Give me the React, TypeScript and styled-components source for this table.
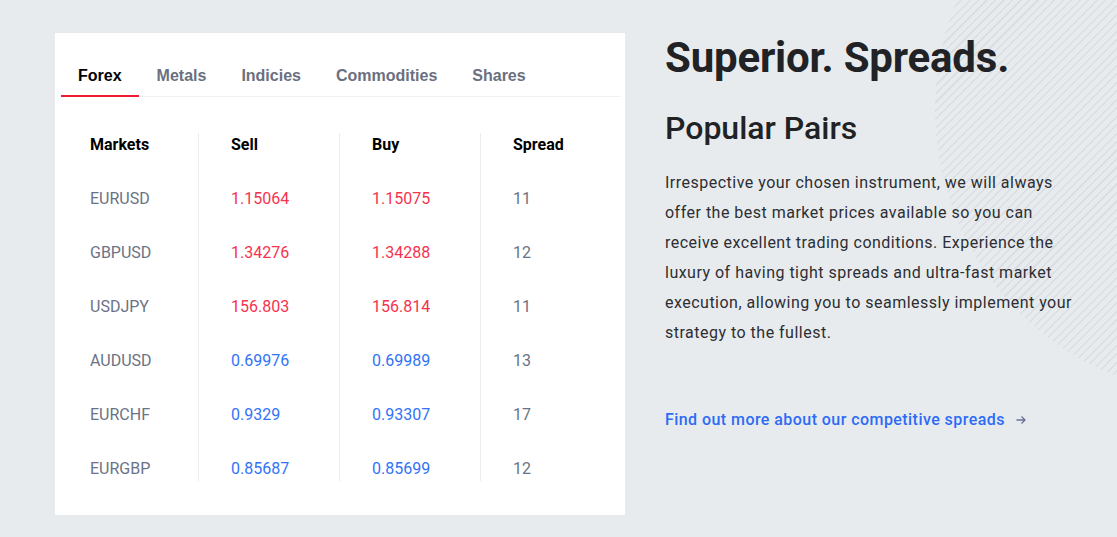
import React from "react";
import styled, { createGlobalStyle } from "styled-components";

const Global = createGlobalStyle`
  html, body { margin: 0; padding: 0; }
  body {
    background: #e8ebee;
    font-family: Roboto, "Liberation Sans", Arial, sans-serif;
    overflow: hidden;
  }
`;

const Page = styled.div`
  position: relative;
  width: 1117px;
  height: 537px;
  overflow: hidden;
  background: #e8ebee;
`;

const Hatch = styled.div`
  position: absolute;
  left: 935px;
  top: -176px;
  width: 572px;
  height: 572px;
  border-radius: 50%;
  background: repeating-linear-gradient(
    135deg,
    transparent 0px,
    transparent 4.5px,
    #d6dadf 4.5px,
    #d6dadf 6px
  );
  opacity: 0.75;
`;

const Layout = styled.div`
  position: relative;
  display: flex;
  gap: 40px;
  padding: 33px 0 0 55px;
`;

const Card = styled.div`
  width: 570px;
  height: 482px;
  box-sizing: border-box;
  background: #fff;
  padding: 20px 5px 0 6px;
`;

const Tabs = styled.div`
  display: flex;
  gap: 1px;
  border-bottom: 1px solid #f1f1f3;
`;

const Tab = styled.div<{ $active?: boolean }>`
  padding: 13px 17px 9px;
  font-family: "Liberation Sans", Arial, sans-serif;
  font-weight: 700;
  font-size: 16px;
  line-height: 20px;
  color: ${(p) => (p.$active ? "#000" : "#6a7080")};
  border-bottom: 2px solid ${(p) => (p.$active ? "#ee1c2e" : "transparent")};
  margin-bottom: -1px;
`;

const Table = styled.div`
  display: grid;
  grid-template-columns: repeat(4, 141px);
  margin: 36px 0 0 -4px;
`;

const Cell = styled.div<{ $col: number; $last?: boolean; $head?: boolean; $tone?: string }>`
  padding: 0 0 ${(p) => (p.$last ? "0" : "30px")} ${(p) => (p.$col === 0 ? "33px" : "32px")};
  border-left: ${(p) => (p.$col > 0 ? "1px solid #ededef" : "none")};
  font-size: 16px;
  line-height: 24px;
  font-weight: ${(p) => (p.$head ? 700 : 400)};
  color: ${(p) =>
    p.$head
      ? "#000"
      : p.$tone === "red"
      ? "#f5334f"
      : p.$tone === "blue"
      ? "#3173f7"
      : "#6b7285"};
`;

const Side = styled.div`
  width: 430px;
  display: flex;
  flex-direction: column;
`;

const Title = styled.h1`
  margin: 0;
  font-size: 42px;
  line-height: 50px;
  font-weight: 700;
  color: #212225;
  letter-spacing: -0.2px;
`;

const Subtitle = styled.h2`
  margin: 25px 0 0;
  font-size: 32px;
  line-height: 40px;
  font-weight: 500;
  color: #212225;
`;

const Text = styled.p`
  margin: 20px 0 0;
  font-size: 16px;
  line-height: 30px;
  color: #2c2e33;
  letter-spacing: 0.49px;
  width: 416px;
`;

const Link = styled.a`
  margin-top: 60px;
  display: flex;
  align-items: center;
  gap: 10px;
  font-size: 16px;
  line-height: 24px;
  font-weight: 500;
  color: #2d6bf5;
  letter-spacing: 0.44px;
  text-decoration: none;
`;

const Arrow = styled.svg`
  width: 12px;
  height: 12px;
  color: #66719a;
`;

const rows: [string, string, string, string, string][] = [
  ["EURUSD", "1.15064", "1.15075", "11", "red"],
  ["GBPUSD", "1.34276", "1.34288", "12", "red"],
  ["USDJPY", "156.803", "156.814", "11", "red"],
  ["AUDUSD", "0.69976", "0.69989", "13", "blue"],
  ["EURCHF", "0.9329", "0.93307", "17", "blue"],
  ["EURGBP", "0.85687", "0.85699", "12", "blue"],
];

const tabs = ["Forex", "Metals", "Indicies", "Commodities", "Shares"];
const heads = ["Markets", "Sell", "Buy", "Spread"];

export default function App() {
  return (
    <Page>
      <Global />
      <Hatch />
      <Layout>
        <Card>
          <Tabs>
            {tabs.map((t, i) => (
              <Tab key={t} $active={i === 0}>
                {t}
              </Tab>
            ))}
          </Tabs>
          <Table>
            {heads.map((h, i) => (
              <Cell key={h} $col={i} $head>
                {h}
              </Cell>
            ))}
            {rows.map((r, ri) => {
              const last = ri === rows.length - 1;
              return (
                <React.Fragment key={r[0]}>
                  <Cell $col={0} $last={last}>{r[0]}</Cell>
                  <Cell $col={1} $last={last} $tone={r[4]}>{r[1]}</Cell>
                  <Cell $col={2} $last={last} $tone={r[4]}>{r[2]}</Cell>
                  <Cell $col={3} $last={last}>{r[3]}</Cell>
                </React.Fragment>
              );
            })}
          </Table>
        </Card>
        <Side>
          <Title>Superior. Spreads.</Title>
          <Subtitle>Popular Pairs</Subtitle>
          <Text>
            Irrespective your chosen instrument, we will always offer the best
            market prices available so you can receive excellent trading
            conditions. Experience the luxury of having tight spreads and
            ultra-fast market execution, allowing you to seamlessly implement
            your strategy to the fullest.
          </Text>
          <Link href="#">
            Find out more about our competitive spreads
            <Arrow viewBox="0 0 12 12" fill="none" stroke="currentColor" strokeWidth="1.3">
              <path d="M1.5 6h8.5M6.5 2.5L10 6l-3.5 3.5" />
            </Arrow>
          </Link>
        </Side>
      </Layout>
    </Page>
  );
}
